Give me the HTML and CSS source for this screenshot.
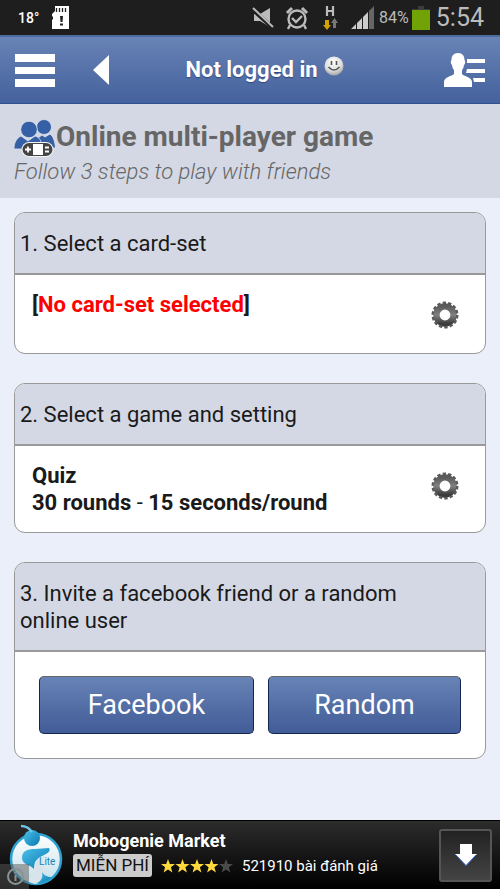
FILE: index.html
```html
<!DOCTYPE html>
<html lang="en">
<head>
<meta charset="utf-8">
<meta name="viewport" content="width=device-width, initial-scale=1">
<title>Online multi-player game</title>
<link rel="stylesheet" href="styles.css">
</head>
<body>
<svg class="defs" aria-hidden="true">
  <defs>
    <linearGradient id="gearFill" x1="0" y1="0" x2="0" y2="1"><stop offset="0" stop-color="#5a5a5a"/><stop offset=".5" stop-color="#808080"/><stop offset="1" stop-color="#3c3c3c"/></linearGradient>
    <symbol id="gear" viewBox="0 0 28 28">
      <circle cx="14" cy="14" r="8.6" fill="none" stroke="url(#gearFill)" stroke-width="6.4"/>
      <circle cx="14" cy="14" r="12.3" fill="none" stroke="#5a5a5a" stroke-width="2.4" stroke-dasharray="3.4 2.12"/>
    </symbol>
  </defs>
</svg>

<div class="status">
  <span class="temp">18°</span>
  <svg class="sd" width="18" height="24" viewBox="0 0 18 24"><path d="M3 0h14v23H0V14l1-1v-2L0 10V8l3-3z" fill="#fff"/><path d="M4.500 2v4M7.500 2v4M10.500 2v4M13.500 2v4" stroke="#222" stroke-width="1.300"/><path d="M8 10h3l-.5 6h-2zM8 17.500h3v2H8z" fill="#222"/></svg>
  <span class="spacer"></span>
  <svg class="mute" width="23" height="22" viewBox="0 0 23 22"><path d="M2 7h6l10-6v19L8 14H2z" fill="#bbb"/><path d="M1 3l20 18" stroke="#1e1e1e" stroke-width="4"/><path d="M1 1l20 19" stroke="#bbb" stroke-width="2"/></svg>
  <svg class="alarm" width="24" height="24" viewBox="0 0 24 24" fill="none" stroke="#bbb" stroke-width="2.400"><circle cx="12" cy="13" r="8.500"/><path d="M7 12l4 4 6-6M5 19l-2 4M19 19l2 4"/><path d="M2 7l5-5M22 7l-5-5" stroke-width="3"/></svg>
  <svg class="data" width="16" height="24" viewBox="0 0 16 24"><path d="M4 0v10M10 0v10M4 5h6" stroke="#bbb" stroke-width="2.200" fill="none"/><path d="M2 14h4v5h2l-4 5-4-5h2z" fill="#d2a000"/><path d="M10 22v-5H8l3.500-5 3.500 5h-2v5z" fill="#777"/></svg>
  <svg class="signal" width="24" height="23" viewBox="0 0 24 23"><path d="M0 23l5-5v5zM6 17l5-5v11H6zM12 11l5-5v17h-5z" fill="#ccc"/><path d="M18 5l5-5v23h-5z" fill="#666"/></svg>
  <span class="percent">84%</span>
  <svg class="battery" width="18" height="24" viewBox="0 0 18 24"><path d="M6 0h6v3h6v2H0V3h6z" fill="#3c3c3c"/><path d="M0 4h18v20H0z" fill="#72a306"/></svg>
  <span class="clock">5:54</span>
</div>

<header class="nav">
  <button class="icon-btn" type="button" aria-label="Menu"><svg width="40" height="33" viewBox="0 0 40 33"><path d="M0 0h40v8H0zM0 13h40v7H0zM0 25h40v8H0z" fill="#fff"/></svg></button>
  <button class="icon-btn back" type="button" aria-label="Back"><svg width="16" height="30" viewBox="0 0 16 30"><path d="M16 0v30L0 15z" fill="#fff"/></svg></button>
  <div class="who"><span>Not logged in</span>
    <svg width="20" height="20" viewBox="0 0 20 20"><defs><radialGradient id="face" cx=".45" cy=".3" r=".75"><stop offset="0" stop-color="#fff"/><stop offset=".6" stop-color="#ddd"/><stop offset="1" stop-color="#999"/></radialGradient></defs><circle cx="10" cy="10" r="9.500" fill="url(#face)"/><path d="M7.500 5v4M12.500 5v4" stroke="#555" stroke-width="1.600"/><path d="M4.500 11q5.500 6 11 0" stroke="#555" stroke-width="1.500" fill="none"/></svg>
  </div>
  <button class="icon-btn" type="button" aria-label="Friends"><svg width="41" height="34" viewBox="0 0 41 34" fill="#fff"><path d="M14 0c4.500 0 6.500 3 6.500 7 1 1 1 4-.5 5-.5 3-1 4-2 5v4c1 2 10 3 10 8v5H0v-5c0-5 8-6 10-8v-4c-1-1-1.500-2-2-5-1.500-1-1.500-4-.5-5C7.500 3 9.500 0 14 0z"/><path d="M23 6h18v4H23zM23 16h18v4H22zM29 25h12v4H30z"/></svg></button>
</header>

<section class="hero">
  <div class="hero-title">
    <svg width="42" height="39" viewBox="0 0 42 39"><g fill="#3560a5" stroke="#dfe3ee" stroke-width=".8"><path d="M24 20l4-3 3 2 5-3c3 2 5 7 5.500 14H26z"/><circle cx="30" cy="9" r="7.500"/><path d="M0 31c0-7 3-11 7-13l7 5 7-5c5 1 7 6 7 13z"/><circle cx="15" cy="11.500" r="8.300"/></g><rect x="7.500" y="24" width="32" height="15" rx="7.500" fill="#f4f5f9"/><rect x="8.500" y="25" width="30" height="13" rx="6.500" fill="#444"/><path d="M19 26h10v11H19z" fill="#fff"/><path d="M11 31.500h6M14 28.500v6M31 29.500h4M31 33.500h4" stroke="#fff" stroke-width="1.800"/></svg>
    <h1>Online multi-player game</h1>
  </div>
  <p>Follow 3 steps to play with friends</p>
</section>

<main>
  <section class="card">
    <h2>1. Select a card-set</h2>
    <div class="body">
      <p>[<span class="missing">No card-set selected</span>]</p>
      <button class="icon-btn" type="button" aria-label="Choose card-set"><svg width="28" height="28"><use href="#gear"/></svg></button>
    </div>
  </section>
  <section class="card">
    <h2>2. Select a game and setting</h2>
    <div class="body">
      <p>Quiz<br>30 rounds <span class="dash">-</span> 15 seconds/round</p>
      <button class="icon-btn" type="button" aria-label="Choose game settings"><svg width="28" height="28"><use href="#gear"/></svg></button>
    </div>
  </section>
  <section class="card">
    <h2>3. Invite a facebook friend or a random online user</h2>
    <div class="actions">
      <button type="button">Facebook</button>
      <button type="button">Random</button>
    </div>
  </section>
</main>

<footer class="ad">
  <svg class="ad-logo" width="56" height="62" viewBox="0 0 56 62">
    <defs><linearGradient id="blue" x1="0" y1="0" x2="1" y2="1"><stop offset="0" stop-color="#4cc0ea"/><stop offset="1" stop-color="#0879b0"/></linearGradient><linearGradient id="disc" x1="0" y1="0" x2="0" y2="1"><stop offset="0" stop-color="#fff"/><stop offset="1" stop-color="#c4dfe9"/></linearGradient></defs>
    <circle cx="28" cy="35" r="25" fill="url(#disc)" stroke="#2ca0cf" stroke-width="2.500"/>
    <path d="M14 34c0-7 5-9 13-9l14-1c2 3-1 5-5 7-7 3-10 6-10 14-3-4-12-4-12-11z" fill="url(#blue)"/>
    <path d="M27 45c-1-8 5-11 10-14-3 7-2 10 0 15 3 8-3 13-10 14-5-1-8-3-11-5 7 0 11-4 11-10z" fill="#d8e4e9"/>
    <path d="M44 53c-5 4-8 6-15 6 5-2 6-7 5-11 2 3 5 5 10 5z" fill="url(#blue)"/>
    <circle cx="24" cy="14" r="8" fill="url(#blue)"/><path d="M24 8q-4-6-11-6" stroke="#6cc9ea" stroke-width="2.500" fill="none"/>
    <text x="31" y="41" class="lite">Lite</text>
  </svg>
  <span class="info"><svg width="17" height="17" viewBox="0 0 17 17" fill="none" stroke="#8b9294" stroke-width="2"><circle cx="8.500" cy="8.500" r="7.500"/><path d="M8.500 7v6M8.500 3.500v2"/></svg></span>
  <div class="ad-text">
    <strong>Mobogenie Market</strong>
    <div class="ad-meta">
      <span class="free">MIỄN PHÍ</span>
      <svg width="72" height="14" viewBox="0 0 72 14"><defs><path id="star" d="M7 0l1.800 4.900H14L9.900 8.200 11.400 13.500 7 10.400l-4.400 3.100 1.500-5.300L0 4.900h5.200z"/></defs><g fill="#ffd83b"><use href="#star"/><use href="#star" x="14.500"/><use href="#star" x="29"/><use href="#star" x="43.500"/></g><use href="#star" x="58" fill="#4a4a4a"/></svg>
      <span class="reviews">521910 bài đánh giá</span>
    </div>
  </div>
  <button class="download" type="button" aria-label="Download"><svg width="22" height="22" viewBox="0 0 22 22"><path d="M5 0h12v10h5L11 21.500 0 10h5z" fill="#fff"/><path d="M1 11l10 10.500L21 11" stroke="#3f6be0" fill="none"/></svg></button>
</footer>
</body>
</html>
```
FILE: styles.css
```css
* { box-sizing: border-box; }
body {
  margin: 0;
  min-height: 100vh;
  display: flex;
  flex-direction: column;
  background: #ebeff9;
  color: #1a1a1a;
  font-family: Roboto, "Liberation Sans", sans-serif;
}
h1, h2, p { margin: 0; }
svg { display: block; flex: none; }
button { font: inherit; cursor: pointer; }
.defs { position: absolute; width: 0; height: 0; }
.icon-btn { padding: 0; border: 0; background: none; }

.status {
  display: flex;
  align-items: center;
  height: 35px;
  padding: 0 16px 0 18px;
  background: #1e1e1e;
  color: #bbb;
}
.temp { width: 34px; color: #fff; font-size: 14px; font-weight: 500; }
.spacer { flex: 1; }
.alarm { margin-left: 10px; }
.data { margin-left: 14px; }
.signal { margin-left: 12px; }
.percent { margin-left: 4px; font-size: 16px; }
.battery { margin-left: 3px; }
.clock { margin-left: 6px; font-size: 25px; }

.nav {
  display: flex;
  align-items: center;
  height: 69px;
  padding: 0 15px;
  background: linear-gradient(#6883b5, #44619d);
  border-top: 2px solid #4e6ca4;
  border-bottom: 1px solid #2f5192;
}
.back { margin-left: 38px; }
.who {
  flex: 1;
  display: flex;
  justify-content: center;
  gap: 6px;
  padding-right: 24px;
  color: #fff;
  font-size: 22px;
  line-height: 28px;
  font-weight: 700;
  text-shadow: 0 1px 1px #2f4778;
}

.hero {
  padding: 14px 14px 12px;
  background: #d4d8e4;
  color: #666;
}
.hero-title { display: flex; }
.hero h1 { font-size: 28px; line-height: 38px; font-weight: 700; }
.hero p { font-size: 22px; line-height: 29px; font-style: italic; font-weight: 300; }

main {
  flex: 1;
  display: flex;
  flex-direction: column;
  gap: 29px;
  padding: 14px;
}
.card {
  overflow: hidden;
  background: #fff;
  border: 1px solid #999;
  border-radius: 11px;
  font-size: 22px;
  line-height: 27px;
}
.card h2 {
  padding: 17px 48px 16px 5px;
  background: #d4d8e4;
  border-bottom: 2px solid #999;
  font-size: inherit;
  font-weight: 400;
}
.body {
  display: flex;
  justify-content: space-between;
  padding: 16px 26px 16px 17px;
  font-weight: 700;
}
.body .icon-btn { align-self: flex-start; padding: 10px 0 8px; }
.missing { color: #f00; }
.dash { font-weight: 400; }
.actions {
  display: grid;
  grid-template-columns: 215fr 193fr;
  gap: 14px;
  padding: 24px;
}
.actions button {
  height: 58px;
  border: 1px solid #14264d;
  border-top-color: #666;
  border-radius: 5px;
  background: linear-gradient(#6883b5, #415c98);
  color: #fff;
  font-size: 27px;
}

.ad {
  position: relative;
  display: flex;
  align-items: center;
  height: 69px;
  padding: 0 8px;
  background: linear-gradient(#2c2c2c, #000);
  border-top: 1px solid #000;
  color: #fff;
}
.lite { fill: #1a86b8; font-size: 10px; }
.info {
  position: absolute;
  left: 0;
  bottom: 0;
  padding: 4px 5px 4px 7px;
  background: rgba(90, 90, 90, .5);
}
.ad-text { flex: 1; padding: 0 0 3px 9px; }
.ad-text strong { display: block; font-size: 18px; line-height: 22px; }
.ad-meta { display: flex; align-items: center; gap: 9px; margin-top: 2px; }
.free { padding: 0 3px; border-radius: 3px; background: #ccc; color: #111; font-size: 17px; line-height: 23px; }
.reviews { font-size: 15px; }
.download {
  display: grid;
  place-items: center;
  width: 53px;
  height: 53px;
  padding: 0;
  border: 2px solid #555;
  border-radius: 3px;
  background: linear-gradient(#222, #444);
}
```
